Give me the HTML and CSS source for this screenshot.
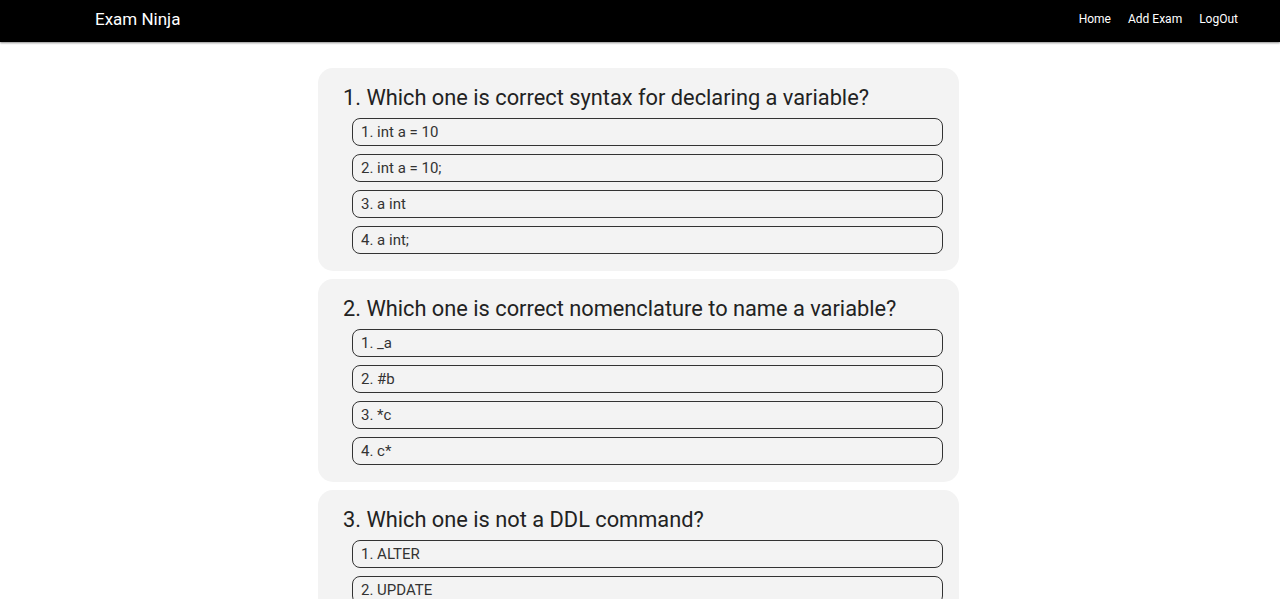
FILE: index.html
```html
<!DOCTYPE html>
<html lang="en">
<head>
<meta charset="utf-8">
<title>Exam Ninja</title>
<link rel="stylesheet" href="styles.css">
</head>
<body>
<header class="navbar">
  <a class="brand" href="#">Exam Ninja</a>
  <nav class="nav-links">
    <a href="#">Home</a>
    <a href="#">Add Exam</a>
    <a href="#">LogOut</a>
  </nav>
</header>
<main class="exam">
  <section class="question">
    <h2 class="q-title">1. Which one is correct syntax for declaring a variable?</h2>
    <div class="options">
      <div class="option">1. int a = 10</div>
      <div class="option">2. int a = 10;</div>
      <div class="option">3. a int</div>
      <div class="option">4. a int;</div>
    </div>
  </section>
  <section class="question">
    <h2 class="q-title">2. Which one is correct nomenclature to name a variable?</h2>
    <div class="options">
      <div class="option">1. _a</div>
      <div class="option">2. #b</div>
      <div class="option">3. *c</div>
      <div class="option">4. c*</div>
    </div>
  </section>
  <section class="question">
    <h2 class="q-title">3. Which one is not a DDL command?</h2>
    <div class="options">
      <div class="option">1. ALTER</div>
      <div class="option">2. UPDATE</div>
      <div class="option">3. DROP</div>
      <div class="option">4. CREATE</div>
    </div>
  </section>
</main>
</body>
</html>
```
FILE: styles.css
```css
* { box-sizing: border-box; }
body {
  margin: 0;
  font-family: Roboto, "Liberation Sans", sans-serif;
  background: #fff;
  color: #222;
}
.navbar {
  height: 42px;
  background: #000;
  display: flex;
  align-items: center;
  justify-content: space-between;
  padding: 0 42px 0 95px;
  box-shadow: 0 1px 2px rgba(0,0,0,0.45);
}
.brand {
  color: #fff;
  text-decoration: none;
  font-size: 17px;
  padding-bottom: 5px;
}
.nav-links {
  display: flex;
  gap: 17px;
  padding-bottom: 5px;
}
.nav-links a {
  color: #fff;
  text-decoration: none;
  font-size: 12px;
}
.exam {
  width: 641px;
  margin: 26px 0 40px calc(50% - 322px);
  display: flex;
  flex-direction: column;
  gap: 8px;
}
.question {
  background: #f3f3f3;
  border-radius: 15px;
  padding: 17px 16px 17px 25px;
}
.q-title {
  margin: 0 0 7px;
  font-size: 21.8px;
  font-weight: 400;
  line-height: 26px;
  color: #222;
}
.options {
  margin-left: 9px;
  display: flex;
  flex-direction: column;
  gap: 8px;
}
.option {
  height: 28px;
  border: 1px solid #333;
  border-radius: 8px;
  padding: 0 8px;
  font-size: 15px;
  line-height: 26px;
  color: #333;
}
```
